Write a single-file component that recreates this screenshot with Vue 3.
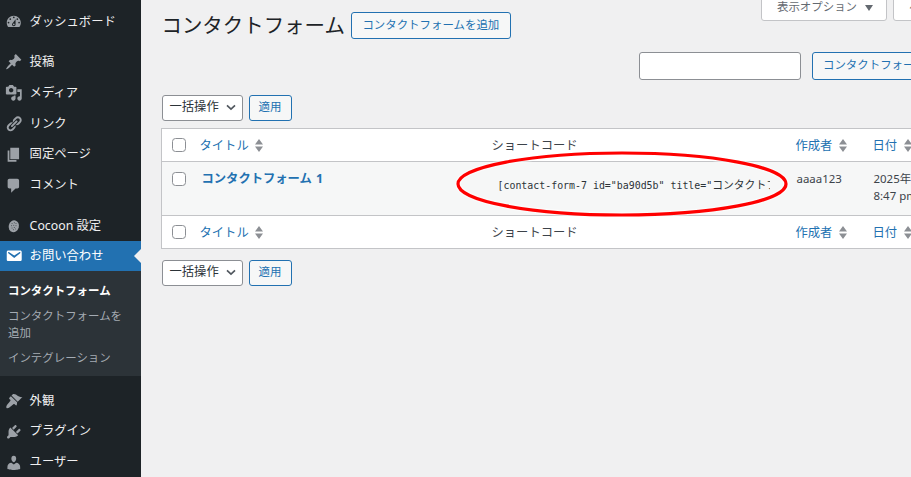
<script setup>
const icons = {
  dashboard: 'M3.76 16h12.48c1.1-1.37 1.76-3.11 1.76-5 0-4.42-3.58-8-8-8s-8 3.58-8 8c0 1.89.66 3.63 1.76 5zM10 4c.55 0 1 .45 1 1s-.45 1-1 1-1-.45-1-1 .45-1 1-1zM6 6c.55 0 1 .45 1 1s-.45 1-1 1-1-.45-1-1 .45-1 1-1zm8 0c.55 0 1 .45 1 1s-.45 1-1 1-1-.45-1-1 .45-1 1-1zm-5.37 5.55L12 7v6c0 1.1-.9 2-2 2s-2-.9-2-2c0-.57.24-1.08.63-1.45zM4 10c.55 0 1 .45 1 1s-.45 1-1 1-1-.45-1-1 .45-1 1-1zm12 0c.55 0 1 .45 1 1s-.45 1-1 1-1-.45-1-1 .45-1 1-1zm-5 3c0-.55-.45-1-1-1s-1 .45-1 1 .45 1 1 1 1-.45 1-1z',
  post: 'M10.44 3.02l1.82-1.82 6.36 6.35-1.83 1.82c-1.05-.68-2.48-.57-3.41.36l-.75.75c-.92.93-1.04 2.35-.35 3.41l-1.83 1.82-2.41-2.41-2.8 2.79c-.42.42-3.38 2.71-3.8 2.29s1.86-3.39 2.28-3.81l2.79-2.79L4.1 9.36l1.83-1.82c1.05.69 2.48.57 3.4-.36l.75-.75c.93-.92 1.05-2.35.36-3.41z',
  media: 'M13 11V4c0-.55-.45-1-1-1h-1.67L9 1H5L3.67 3H2c-.55 0-1 .45-1 1v7c0 .55.45 1 1 1h10c.55 0 1-.45 1-1zM7 4.5c1.38 0 2.5 1.12 2.5 2.5S8.38 9.5 7 9.5 4.5 8.38 4.5 7 5.62 4.5 7 4.5zM14 6h5v10.5c0 1.38-1.12 2.5-2.5 2.5S14 17.88 14 16.5s1.12-2.5 2.5-2.5c.17 0 .34.02.5.05V9h-3V6zm-4 8.05V13h2v3.5c0 1.38-1.12 2.5-2.5 2.5S7 17.88 7 16.5 8.12 14 9.5 14c.17 0 .34.02.5.05z',
  links: 'M17.74 2.76c1.68 1.69 1.68 4.41 0 6.1l-1.53 1.52c-1.12 1.12-2.7 1.47-4.14 1.09l2.62-2.61.76-.77.76-.76c.84-.84.84-2.2 0-3.04-.84-.85-2.2-.85-3.04 0l-.77.76-3.38 3.38c-.37-1.44-.02-3.02 1.1-4.14l1.52-1.53c1.69-1.68 4.42-1.68 6.1 0zM8.59 13.43l5.34-5.34c.42-.42.42-1.1 0-1.52-.44-.43-1.13-.39-1.53 0l-5.33 5.34c-.42.42-.42 1.1 0 1.52.44.43 1.13.39 1.52 0zm-.76 2.29l4.14-4.15c.38 1.44.03 3.02-1.09 4.14l-1.52 1.53c-1.69 1.68-4.41 1.68-6.1 0-1.68-1.68-1.68-4.42 0-6.1l1.53-1.52c1.12-1.12 2.7-1.47 4.14-1.1l-4.14 4.15c-.85.84-.85 2.2 0 3.05.84.84 2.2.84 3.04 0z',
  page: 'M6 15V2h10v13H6zm-1 1h8v2H3V5h2v11z',
  comments: 'M5 2h9c1.1 0 2 .9 2 2v7c0 1.1-.9 2-2 2h-2l-5 5v-5H5c-1.1 0-2-.9-2-2V4c0-1.1.9-2 2-2z',
  email: 'M3.87 4h13.25C18.37 4 19 4.59 19 5.79v8.42c0 1.19-.63 1.79-1.88 1.79H3.87c-1.25 0-1.88-.6-1.88-1.79V5.79c0-1.2.63-1.79 1.88-1.79zm6.62 8.6l6.74-5.53c.24-.2.43-.66.13-1.07-.29-.41-.82-.42-1.17-.17l-5.7 3.86L4.8 5.83c-.35-.25-.88-.24-1.17.17-.3.41-.11.87.13 1.07z',
  appearance: 'M14.48 11.06L7.41 3.99l1.5-1.5c.5-.56 2.3-.47 3.51.32 1.21.8 1.43 1.28 2.91 2.1 1.18.64 2.45 1.26 4.45.85zm-.71.71L6.7 4.7 4.93 6.47c-.39.39-.39 1.02 0 1.41l1.06 1.06c.39.39.39 1.03 0 1.42-.6.6-1.6 2.1-2.6 3.1-1 1-2.2 3-1.9 4.2.1.4.3.6.7.7 1.2.3 3.2-.9 4.2-1.9s2.5-2 3.1-2.6c.39-.39 1.03-.39 1.42 0l1.06 1.06c.39.39 1.02.39 1.41 0z',
  plugins: 'M13.11 4.36L9.87 7.6 8 5.73l3.24-3.24c.35-.34 1.05-.2 1.56.32.52.51.66 1.21.31 1.55zm-8 1.77l.91-1.12 9.01 9.01-1.19.84c-.71.71-2.63 1.16-3.82 1.16H6.14L4.9 17.26c-.59.59-1.54.59-2.12 0-.59-.58-.59-1.53 0-2.12l1.24-1.24v-3.88c0-1.13.4-3.19 1.09-3.89zm7.26 3.97l3.24-3.24c.34-.35 1.04-.21 1.55.31.52.51.66 1.21.31 1.55l-3.24 3.25z',
  users: 'M10 9.25c-2.27 0-2.73-3.44-2.73-3.44C7 4.02 7.82 2 9.97 2c2.16 0 2.98 2.02 2.71 3.81 0 0-.41 3.44-2.68 3.44zm0 2.57L12.72 10c2.39 0 4.52 2.33 4.52 4.53v2.49s-3.65 1.13-7.24 1.13c-3.65 0-7.24-1.13-7.24-1.13v-2.49c0-2.25 1.94-4.48 4.47-4.48z'
}
const cocoonDots = [
  [8, 7.5], [10.5, 6.5], [12.5, 7.5], [7.5, 10], [10, 9.5], [12.5, 10], [8, 12.5], [10.5, 12], [12, 13.5], [9.5, 14.5]
]
const topMenu = [
  { icon: 'dashboard', label: 'ダッシュボード' },
  { icon: 'post', label: '投稿', sep: true },
  { icon: 'media', label: 'メディア' },
  { icon: 'links', label: 'リンク' },
  { icon: 'page', label: '固定ページ' },
  { icon: 'comments', label: 'コメント' },
  { icon: 'cocoon', label: 'Cocoon 設定', sep: true }
]
const bottomMenu = [
  { icon: 'appearance', label: '外観', sep: true },
  { icon: 'plugins', label: 'プラグイン' },
  { icon: 'users', label: 'ユーザー' }
]
const columns = [
  { label: 'タイトル', sort: true },
  { label: 'ショートコード', sort: false },
  { label: '作成者', sort: true },
  { label: '日付', sort: true }
]
</script>

<template>
  <div class="page">
    <aside class="sidebar">
      <a v-for="m in topMenu" :key="m.label" class="item" :class="{ sep: m.sep }">
        <svg class="icon" viewBox="0 0 20 20">
          <template v-if="m.icon === 'cocoon'">
            <ellipse cx="10" cy="10.5" rx="5.8" ry="6.8" transform="rotate(15 10 10.5)" />
            <circle v-for="d in cocoonDots" :key="d[0] + '-' + d[1]" :cx="d[0]" :cy="d[1]" r=".55" class="dot" />
          </template>
          <path v-else :d="icons[m.icon]" />
        </svg>
        <span>{{ m.label }}</span>
      </a>
      <a class="item active">
        <svg class="icon" viewBox="0 0 20 20"><path :d="icons.email" /></svg>
        <span>お問い合わせ</span>
        <i class="arrow"></i>
      </a>
      <div class="submenu">
        <a class="sub current">コンタクトフォーム</a>
        <a class="sub">コンタクトフォームを追加</a>
        <a class="sub">インテグレーション</a>
      </div>
      <a v-for="m in bottomMenu" :key="m.label" class="item" :class="{ sep: m.sep }">
        <svg class="icon" viewBox="0 0 20 20"><path :d="icons[m.icon]" /></svg>
        <span>{{ m.label }}</span>
      </a>
    </aside>

    <main class="main">
      <div class="inner">
        <div class="header">
          <div class="title-group">
            <h1>コンタクトフォーム</h1>
            <a class="btn add">コンタクトフォームを追加</a>
          </div>
          <div class="tabs">
            <a class="tab first">表示オプション<i class="caret"></i></a>
            <a class="tab help">ヘルプ<i class="caret"></i></a>
          </div>
        </div>

        <div class="search">
          <input class="search-input" type="text" />
          <a class="btn search-btn">コンタクトフォームを検索</a>
        </div>

        <div class="tablenav top">
          <div class="select">一括操作
            <svg class="chev" viewBox="0 0 12 8"><path d="M1.2 1.5 6 6l4.8-4.5" /></svg>
          </div>
          <a class="btn apply">適用</a>
        </div>

        <table class="list">
          <colgroup>
            <col class="c0" /><col class="c1" /><col class="c2" /><col class="c3" /><col />
          </colgroup>
          <thead>
            <tr>
              <td class="cb"><input type="checkbox" class="check" /></td>
              <th v-for="c in columns" :key="c.label" :class="{ plain: !c.sort }">
                {{ c.label }}
                <svg v-if="c.sort" class="sort" viewBox="0 0 8 13"><path d="M4 0 8 5.4H0zM0 7.4h8L4 13z" /></svg>
              </th>
            </tr>
          </thead>
          <tbody>
            <tr class="row">
              <td class="cb"><input type="checkbox" class="check" /></td>
              <td class="title-cell"><a>コンタクトフォーム 1</a></td>
              <td class="code-cell"><span class="code">[contact-form-7 id="ba90d5b" title="<span class="jp">コンタクトフォーム 1</span>"]</span></td>
              <td class="author-cell">aaaa123</td>
              <td class="date-cell">2025年8月1日<br />8:47 pm</td>
            </tr>
          </tbody>
          <tfoot>
            <tr>
              <td class="cb"><input type="checkbox" class="check" /></td>
              <th v-for="c in columns" :key="c.label" :class="{ plain: !c.sort }">
                {{ c.label }}
                <svg v-if="c.sort" class="sort" viewBox="0 0 8 13"><path d="M4 0 8 5.4H0zM0 7.4h8L4 13z" /></svg>
              </th>
            </tr>
          </tfoot>
        </table>

        <div class="tablenav bottom">
          <div class="select">一括操作
            <svg class="chev" viewBox="0 0 12 8"><path d="M1.2 1.5 6 6l4.8-4.5" /></svg>
          </div>
          <a class="btn apply">適用</a>
        </div>
      </div>
    </main>

    <svg class="annotation" width="911" height="477" viewBox="0 0 911 477">
      <ellipse cx="622" cy="184" rx="164" ry="31" class="halo" />
      <ellipse cx="622" cy="184" rx="164" ry="31" class="ring" />
    </svg>
  </div>
</template>

<style>
html, body { margin: 0; padding: 0; background: #f0f0f1; }
</style>

<style scoped>
.page {
  position: relative;
  display: flex;
  width: 911px;
  height: 477px;
  overflow: hidden;
  background: #f0f0f1;
  font-family: "Noto Sans", "Noto Sans CJK JP", sans-serif;
  font-size: 11.44px;
  line-height: 16.7px;
  color: #3c434a;
}
.sidebar {
  flex: 0 0 141px;
  box-sizing: border-box;
  padding-top: 6.5px;
  background: #1d2327;
}
.item {
  position: relative;
  display: flex;
  align-items: center;
  gap: 7px;
  height: 30.8px;
  padding-left: 5px;
  font-size: 12.32px;
  color: #f0f0f1;
}
.item.sep { margin-top: 9.6px; }
.icon { flex: 0 0 17.6px; width: 17.6px; height: 17.6px; fill: #9ca1a7; }
.dot { fill: #1d2327; }
.item.active { background: #2271b1; color: #fff; height: 30px; }
.item.active .icon { fill: #fff; }
.arrow {
  position: absolute;
  right: 0;
  top: 50%;
  margin-top: -7px;
  border: 7px solid transparent;
  border-right-color: #f0f0f1;
  border-left-width: 0;
}
.submenu {
  box-sizing: border-box;
  height: 104.7px;
  padding-top: 6.5px;
  background: #2c3338;
}
.sub {
  display: block;
  padding: 4px 8px;
  color: #a4abb3;
  font-size: 11.44px;
  line-height: 17px;
}
.sub.current { color: #fff; font-weight: 700; }

.main { flex: 1 1 0; min-width: 0; overflow: hidden; }
.inner { width: 859px; box-sizing: border-box; padding-left: 20.5px; }
.header { display: flex; justify-content: space-between; align-items: flex-start; height: 39px; }
.title-group { display: flex; align-items: center; gap: 6px; margin-top: 12px; height: 27px; }
h1 { margin: 0; font-size: 20.45px; font-weight: 400; line-height: 27px; color: #1d2327; }
.tabs { display: flex; gap: 6px; margin-top: -7px; }
.tab {
  display: flex;
  align-items: center;
  box-sizing: border-box;
  height: 28px;
  padding: 1px 15px 0;
  background: #fff;
  border: 1px solid #c3c4c7;
  border-radius: 0 0 3px 3px;
  color: #646970;
  white-space: nowrap;
}
.tab.first { width: 126px; }
.tab.help { width: 107px; }
.caret {
  margin-left: 8px;
  border-style: solid;
  border-width: 6px 4.5px 0;
  border-color: #646970 transparent transparent;
}
.btn {
  display: flex;
  align-items: center;
  justify-content: center;
  box-sizing: border-box;
  background: #f6f7f7;
  border: 1px solid #2271b1;
  border-radius: 3px;
  color: #2271b1;
  white-space: nowrap;
}
.add { width: 160px; height: 27px; }
.search { display: flex; justify-content: flex-end; gap: 11px; margin-top: 13px; }
.search-input {
  box-sizing: border-box;
  width: 162px;
  height: 27.5px;
  margin: 0;
  background: #fff;
  border: 1px solid #8c8f94;
  border-radius: 3px;
}
.search-btn { width: 188px; height: 27.5px; justify-content: flex-start; padding-left: 10px; }
.tablenav { display: flex; gap: 6px; }
.tablenav.top { margin-top: 15px; }
.tablenav.bottom { margin-top: 10.5px; }
.select {
  display: flex;
  align-items: center;
  justify-content: space-between;
  box-sizing: border-box;
  width: 81px;
  height: 26.5px;
  padding: 0 6px 0 7px;
  background: #fff;
  border: 1px solid #8c8f94;
  border-radius: 3px;
  color: #2c3338;
  font-size: 12.3px;
}
.chev { width: 10px; height: 7px; fill: none; stroke: #50575e; stroke-width: 2; }
.apply { width: 43px; height: 26.5px; }

.list {
  table-layout: fixed;
  width: 839px;
  margin-top: 7px;
  margin-left: -.5px;
  border-collapse: collapse;
  background: #fff;
  border: 1px solid #c3c4c7;
}
.c0 { width: 29px; }
.c1 { width: 291px; }
.c2 { width: 305px; }
.c3 { width: 77px; }
thead tr, tfoot tr { height: 33px; }
th, td { padding: 0; text-align: left; font-weight: 400; }
thead tr { border-bottom: 1px solid #c3c4c7; }
tfoot tr { border-top: 1px solid #c3c4c7; }
th {
  padding: 2px 0 0 9px;
  color: #2271b1;
  font-size: 12.3px;
  white-space: nowrap;
  overflow: hidden;
}
th.plain { color: #3c434a; padding-left: 10px; }
.sort { width: 8px; height: 13px; margin-left: 3.5px; vertical-align: -2px; fill: #8c8f94; }
.cb { padding-left: 9.5px; }
.check {
  appearance: none;
  display: block;
  box-sizing: border-box;
  width: 14px;
  height: 14px;
  margin: 0;
  background: #fff;
  border: 1px solid #8c8f94;
  border-radius: 3.5px;
}
.row { height: 54px; background: #f6f7f7; }
.row td { vertical-align: top; padding-top: 9px; }
.row .cb { padding-top: 9.5px; }
.title-cell { padding-left: 11px; }
.title-cell a { color: #2271b1; font-weight: 700; font-size: 12.3px; word-spacing: 1px; }
.code-cell { padding-left: 16px; }
.row .code-cell { padding-top: 14px; }
.code {
  display: block;
  width: 272px;
  overflow: hidden;
  white-space: nowrap;
  font-family: "DejaVu Sans Mono", "Noto Sans CJK JP", monospace;
  font-size: 9.92px;
  color: #2c3338;
}
.jp { font-family: "Noto Sans CJK JP", sans-serif; font-size: 10.8px; }
.author-cell { padding-left: 10px; }
.date-cell { padding-left: 10px; white-space: nowrap; overflow: hidden; }

.annotation { position: absolute; left: 0; top: 0; pointer-events: none; }
.annotation ellipse { fill: none; }
.halo { stroke: #fff; stroke-width: 6; opacity: .55; }
.ring { stroke: #f00; stroke-width: 3.2; }
</style>
